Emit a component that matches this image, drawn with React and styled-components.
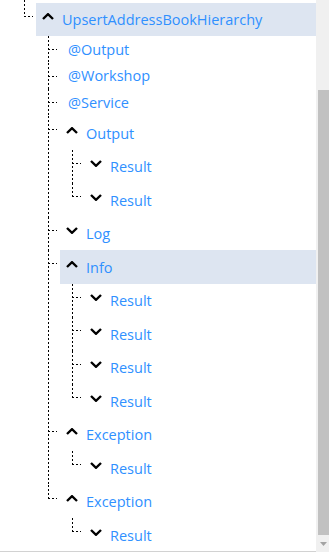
import React from "react";
import styled, { createGlobalStyle } from "styled-components";

const GlobalStyle = createGlobalStyle`
    html, body {
        margin : 0;
        padding : 0;
        background : #ffffff;
    }
    body {
        font-family : "Open Sans", "Noto Sans", Arial, sans-serif;
    }
`;

const Screen = styled.div`
    display : flex;
    width : 329px;
    height : 552px;
    overflow : hidden;
`;

const Panel = styled.div`
    width : 316px;
    height : 551px;
    border-bottom : 1px solid #d2d2d2;
    overflow : hidden;
    background : #ffffff;
`;

const Scrollbar = styled.div`
    width : 13px;
    height : 552px;
    background : #f0f0f0;
    display : flex;
    flex-direction : column;
`;

const Track = styled.div`
    flex : 1;
    padding-top : 90px;
    display : flex;
`;

const Thumb = styled.div`
    width : 11px;
    margin-left : 2px;
    flex : 1;
    background : #c1c1c1;
`;

const ArrowButton = styled.div`
    height : 17px;
    display : flex;
    align-items : center;
    justify-content : center;
    padding-left : 2px;
`;

const dashV = "repeating-linear-gradient(to bottom, #000 0 2px, transparent 2px 4px)";
const dashH = "repeating-linear-gradient(to right, #000 0 2px, transparent 2px 4px)";

const List = styled.ul`
    list-style : none;
    margin : 0;
    padding : 0 0 0 24px;
`;

const Node = styled.li`
    position : relative;
    padding-top : ${props => props.$offset}px;

    &::before {
        content : "";
        position : absolute;
        left : 0;
        top : 0;
        width : 1px;
        height : ${props => props.$last ? `${props.$offset + 14}px` : "100%"};
        background : ${dashV};
    }

    &::after {
        content : "";
        position : absolute;
        left : 0;
        top : ${props => props.$offset + 13}px;
        width : 9px;
        height : 1px;
        background : ${dashH};
    }
`;

const Row = styled.div`
    display : flex;
    align-items : center;
    height : ${props => props.$h}px;
    margin-left : 12px;
    padding-left : ${props => props.$leaf ? 8 : 6}px;
    background : ${props => props.$selected ? "#dde5f1" : "transparent"};
`;

const Chevron = styled.svg`
    width : 12px;
    height : 7px;
    margin-bottom : 6px;
    margin-right : 8px;
    flex : 0 0 auto;
`;

const Label = styled.span`
    font-size : 14.5px;
    color : #2f90ff;
    white-space : nowrap;
    margin-top : ${props => props.$leaf ? -1 : 0}px;
`;

const tree = {
    label : "UpsertAddressBookHierarchy", open : true, selected : true,
    children : [
        { label : "@Output", leaf : true },
        { label : "@Workshop", leaf : true },
        { label : "@Service", leaf : true },
        { label : "Output", open : true, children : [{ label : "Result" }, { label : "Result" }] },
        { label : "Log" },
        { label : "Info", open : true, selected : true, children : [{ label : "Result" }, { label : "Result" }, { label : "Result" }, { label : "Result" }] },
        { label : "Exception", open : true, children : [{ label : "Result" }] },
        { label : "Exception", open : true, children : [{ label : "Result" }] },
    ],
};

// rows are 26.5 / 33.5px tall on screen; alternate whole pixels so the dashes stay crisp
const assignHeights = (root) => {
    let leafCount = 0;
    let tallCount = 0;
    const walk = (node) => {
        if (node.leaf) {
            node.h = leafCount++ % 2 === 0 ? 27 : 26;
        } else {
            node.h = tallCount++ % 2 === 0 ? 33 : 34;
        }
        if (node.open && node.children) node.children.forEach(walk);
    };
    walk(root);
    return root;
};

const data = assignHeights(tree);

const ChevronIcon = ({open}) => (
    <Chevron viewBox="0 0 12 7">
        <polyline
            points={open ? "1,6 6,1.2 11,6" : "1,1 6,5.8 11,1"}
            fill="none"
            stroke="#000"
            strokeWidth="2.4"
        />
    </Chevron>
);

const TreeNode = ({node, last, offset = 0}) => (
    <Node $last={last} $offset={offset}>
        <Row $leaf={node.leaf} $selected={node.selected} $h={node.h}>
            {!node.leaf && <ChevronIcon open={node.open} />}
            <Label $leaf={node.leaf}>{node.label}</Label>
        </Row>
        {node.open && node.children && (
            <List>
                {node.children.map((child, i) =>
                    <TreeNode key={i} node={child} last={i === node.children.length - 1} />
                )}
            </List>
        )}
    </Node>
);

const App = () => {
    return (
        <Screen>
            <GlobalStyle />
            <Panel>
                <List>
                    <TreeNode node={data} last offset={3} />
                </List>
            </Panel>
            <Scrollbar>
                <Track>
                    <Thumb />
                </Track>
                <ArrowButton>
                    <svg width="7" height="4" viewBox="0 0 7 4">
                        <polygon points="0,0 7,0 3.5,4" fill="#a3a3a3" />
                    </svg>
                </ArrowButton>
            </Scrollbar>
        </Screen>
    );
};

export default App;
